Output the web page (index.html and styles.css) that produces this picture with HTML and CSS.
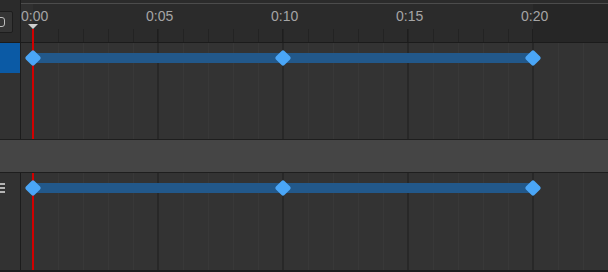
FILE: index.html
```html
<!DOCTYPE html>
<html>
<head>
<meta charset="utf-8">
<link rel="stylesheet" href="styles.css">
</head>
<body>
<div class="app">
  <div class="head">
    <div class="side side-head"><div class="btn"><span class="btn-icon"></span></div></div>
    <div class="ruler">
      <div class="ruler-top"></div>
      <div class="ruler-body">
        <div class="labels"><span>0:00</span><span>0:05</span><span>0:10</span><span>0:15</span><span>0:20</span></div>
        <div class="ticks"></div>
      </div>
    </div>
  </div>
  <div class="section upper">
    <div class="side"><div class="side-row selected"></div></div>
    <div class="lanes">
      <div class="track"><div class="keys"><i class="key"></i><i class="key"></i><i class="key"></i></div></div>
    </div>
  </div>
  <div class="band"></div>
  <div class="section lower">
    <div class="side"><div class="side-row"><span class="menu-icon"></span></div></div>
    <div class="lanes">
      <div class="track"><div class="keys"><i class="key"></i><i class="key"></i><i class="key"></i></div></div>
    </div>
  </div>
  <div class="playhead"><span class="ph-head"></span><span class="ph-line"></span></div>
</div>
</body>
</html>
```
FILE: styles.css
```css
html, body {
  margin: 0;
  padding: 0;
  background: #333333;
  width: 608px;
  height: 272px;
  overflow: hidden;
}
.app {
  position: relative;
  display: flex;
  flex-direction: column;
  width: 608px;
  height: 272px;
  box-sizing: border-box;
  border-bottom: 2px solid #1e1e1e;
  font-family: "Liberation Sans", Arial, sans-serif;
  overflow: hidden;
}
.head {
  display: flex;
  height: 43px;
  flex: none;
  box-sizing: border-box;
  border-bottom: 1px solid #1b1b1b;
}
.side {
  width: 20px;
  flex: none;
  border-right: 1px solid #1c1c1c;
  background: #323232;
  overflow: hidden;
}
.side-head {
  background: #2b2b2b;
  padding-top: 11px;
}
.btn {
  box-sizing: border-box;
  width: 24px;
  height: 22px;
  margin-left: -11px;
  border: 1px solid #1d1d1d;
  border-radius: 2px;
  background: #353535;
  display: flex;
  align-items: center;
  justify-content: center;
}
.btn-icon {
  box-sizing: border-box;
  width: 10px;
  height: 10px;
  margin-right: 3px;
  border: 1.5px solid #bdbdbd;
  border-radius: 3px;
}
.ruler {
  flex: 1;
  display: flex;
  flex-direction: column;
  overflow: hidden;
}
.ruler-top {
  height: 3px;
  background: #2b2b2b;
  border-bottom: 1px solid #4c4c4c;
}
.ruler-body {
  flex: 1;
  padding-top: 4px;
  background: linear-gradient(to right, #303030 0 12px, #2b2b2b 12px 512px, #262626 512px);
}
.labels {
  display: flex;
  height: 16px;
  line-height: 16px;
  font-size: 14px;
  color: #a5a5a5;
}
.labels span {
  width: 125px;
  flex: none;
}
.ticks {
  margin-top: 5px;
  height: 13px;
  width: 512px;
  background-image:
    linear-gradient(to right, #1e1e1e 0 1px, transparent 1px),
    linear-gradient(to right, #232323 0 1px, transparent 1px);
  background-size: 125px 100%, 25px 100%;
  background-position: 11px 0, 12px 0;
}
.section {
  display: flex;
}
.upper {
  height: 96px;
  flex: none;
}
.lower {
  flex: 1;
}
.lanes {
  flex: 1;
  background-color: #333333;
  background-image:
    linear-gradient(to right, #282828 0 2px, transparent 2px),
    linear-gradient(to right, #383838 0 1px, transparent 1px);
  background-size: 125px 100%, 25px 100%;
  background-position: 11px 0, 12px 0;
}
.side-row {
  height: 30px;
  display: flex;
  align-items: center;
}
.selected {
  background: #0b5aa5;
}
.track {
  height: 30px;
  display: flex;
  align-items: center;
}
.keys {
  position: relative;
  z-index: 2;
  margin-left: 3px;
  width: 517px;
  height: 17px;
  display: flex;
  justify-content: space-between;
  align-items: center;
  background: linear-gradient(#22588a, #22588a) center / calc(100% - 17px) 10px no-repeat;
}
.key {
  width: 12px;
  height: 12px;
  margin: 2.5px;
  background: #4aa6f7;
  border-radius: 2px;
  transform: rotate(45deg);
}
.band {
  position: relative;
  z-index: 2;
  flex: none;
  height: 34px;
  box-sizing: border-box;
  background: #454545;
  border-top: 1px solid #1e1e1e;
  border-bottom: 1px solid #1e1e1e;
}
.menu-icon {
  width: 5px;
  height: 10px;
  background: repeating-linear-gradient(#b4b4b4 0 2px, transparent 2px 4px);
}
.playhead {
  position: absolute;
  left: 28px;
  top: 24px;
  bottom: 0;
  width: 10px;
  z-index: 1;
  display: flex;
  flex-direction: column;
  align-items: center;
}
.ph-head {
  width: 0;
  height: 0;
  border-left: 5px solid transparent;
  border-right: 5px solid transparent;
  border-top: 5px solid #cfcfcf;
}
.ph-line {
  flex: 1;
  width: 2px;
  background: #d10000;
}
```
